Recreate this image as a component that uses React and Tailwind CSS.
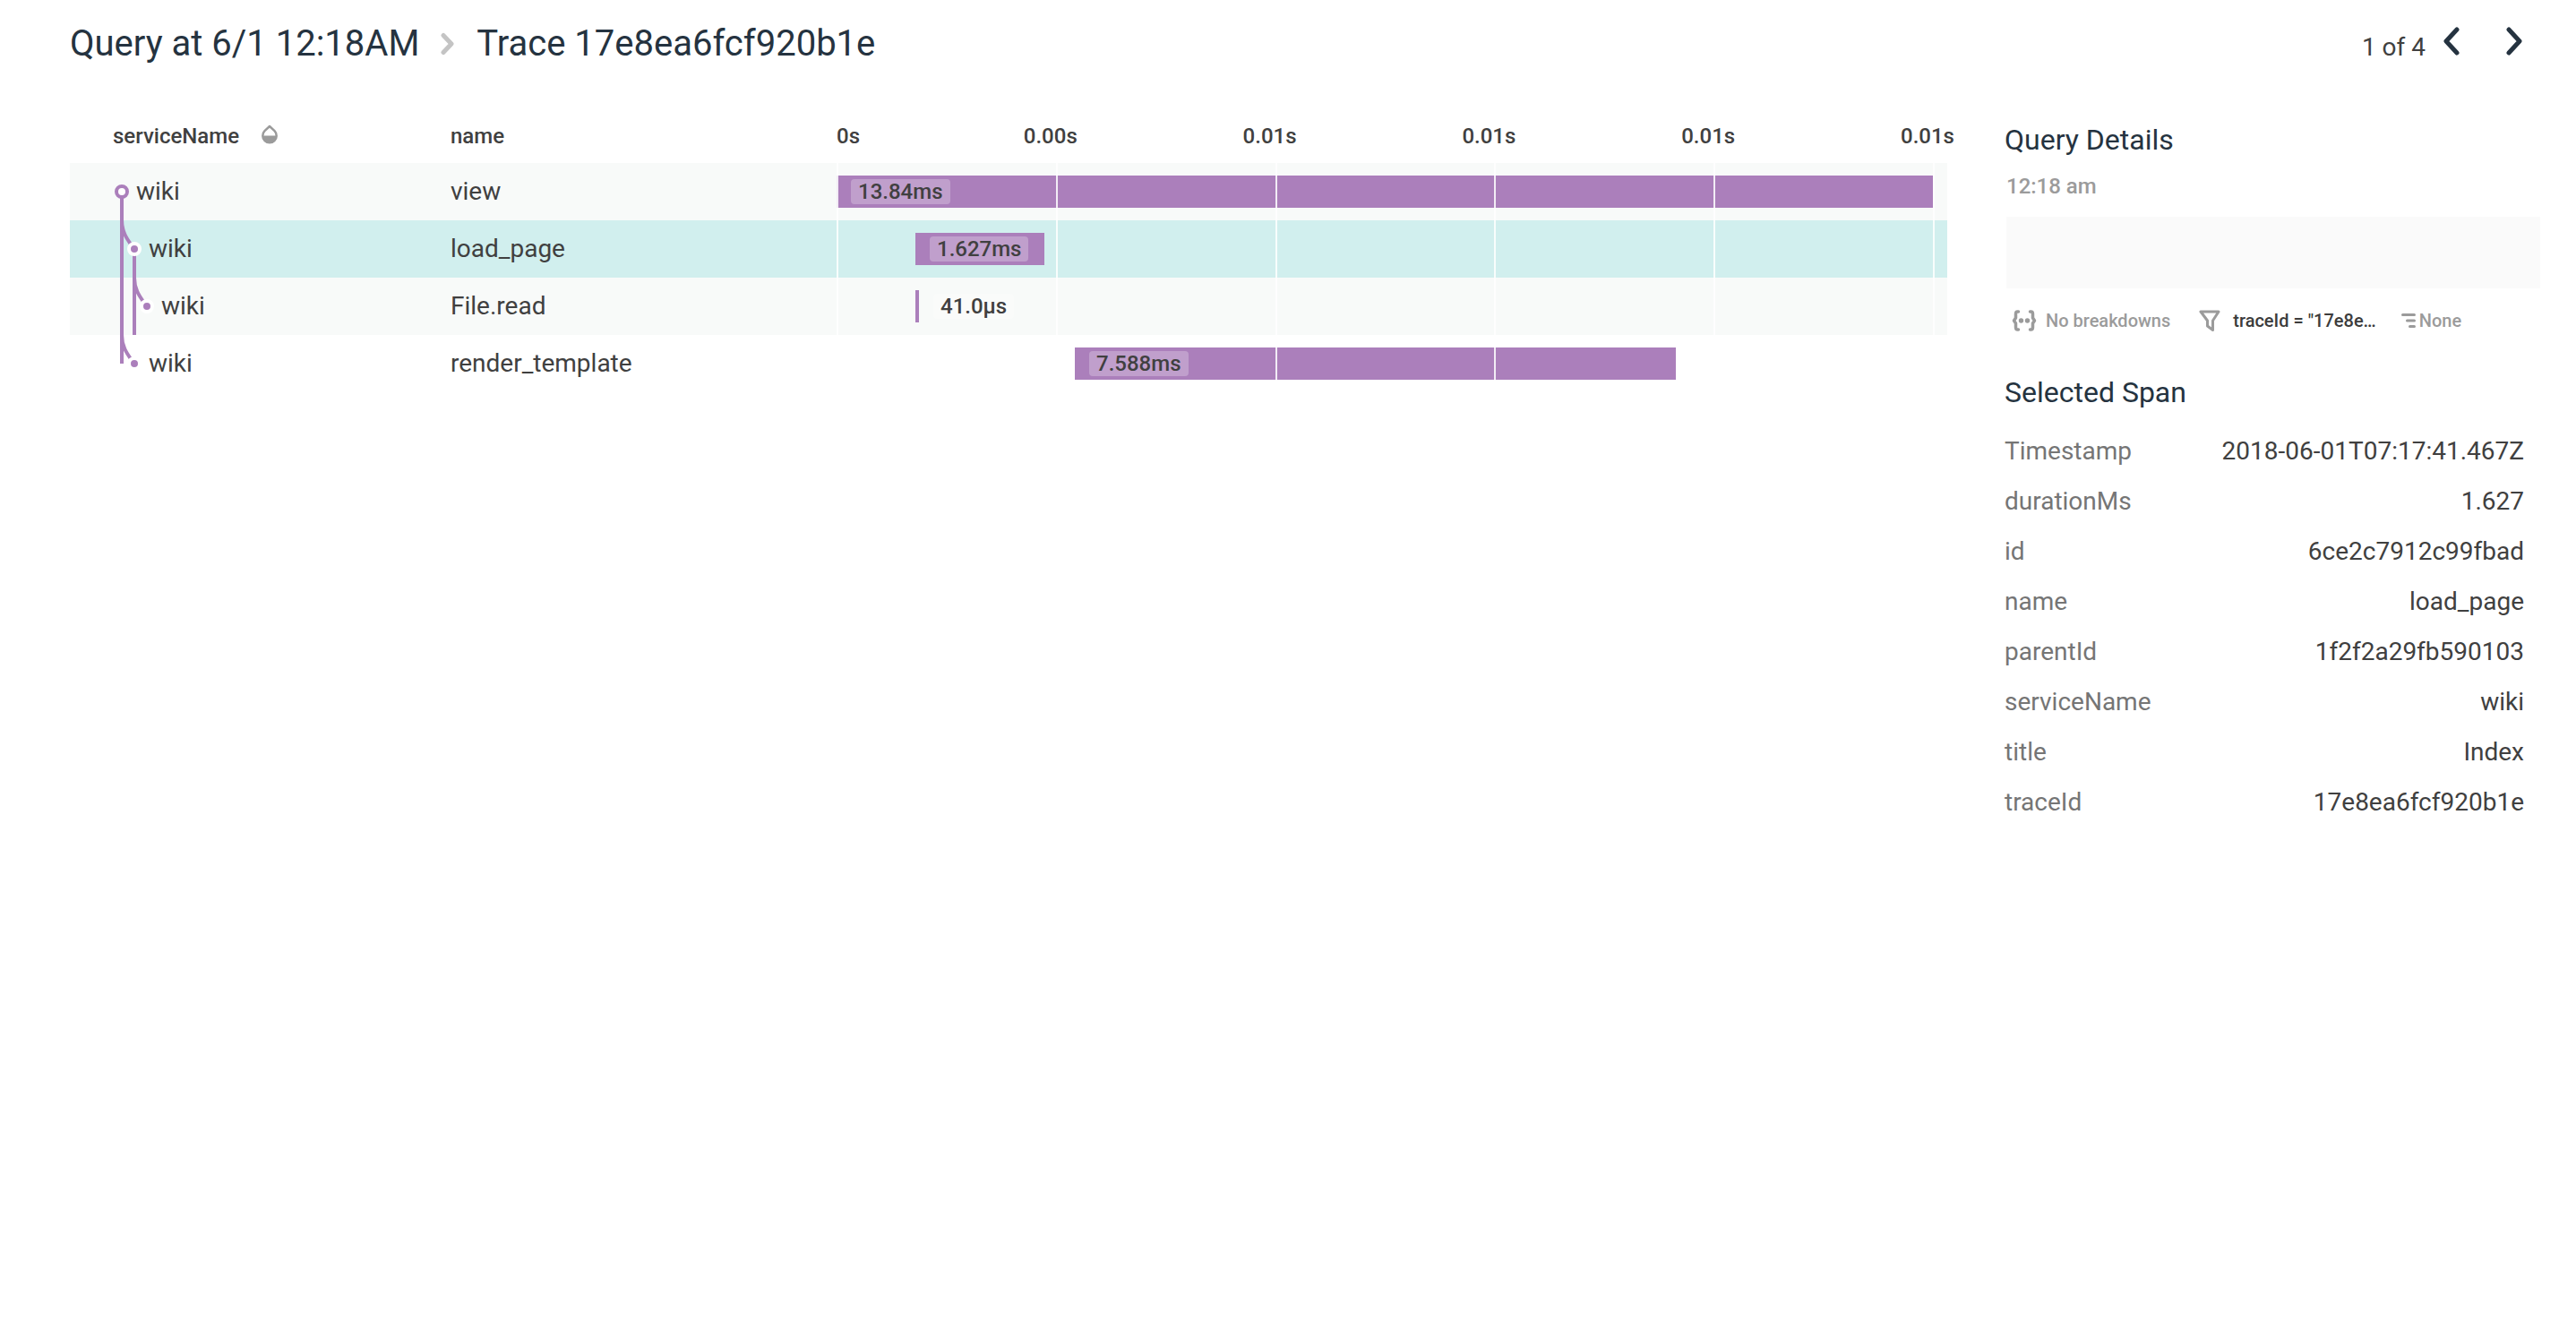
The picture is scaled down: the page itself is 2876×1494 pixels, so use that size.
const TOTAL_MS = 13.84;

const spans = [
  { service: "wiki", name: "view", start: 0, duration: 13.84, label: "13.84ms", depth: 0, lines: [], parent: true },
  { service: "wiki", name: "load_page", start: 0.995, duration: 1.627, label: "1.627ms", depth: 1, lines: [0], parent: true, selected: true },
  { service: "wiki", name: "File.read", start: 0.995, duration: 0.041, label: "41.0µs", depth: 2, lines: [0, 1] },
  { service: "wiki", name: "render_template", start: 3.008, duration: 7.588, label: "7.588ms", depth: 1, lines: [], last: true },
];

const ticks = ["0s", "0.00s", "0.01s", "0.01s", "0.01s", "0.01s"];

const details = [
  ["Timestamp", "2018-06-01T07:17:41.467Z"],
  ["durationMs", "1.627"],
  ["id", "6ce2c7912c99fbad"],
  ["name", "load_page"],
  ["parentId", "1f2f2a29fb590103"],
  ["serviceName", "wiki"],
  ["title", "Index"],
  ["traceId", "17e8ea6fcf920b1e"],
];

function TreeNode({ span }) {
  const x = 10 + span.depth * 14;
  const px = x - 14;
  return (
    <svg width={x + 16} height="64" className="shrink-0" fill="none" stroke="#ab7fbb" strokeWidth="4" aria-hidden="true">
      {span.lines.map((level) => (
        <path key={level} d={`M${10 + level * 14} 0V64`} />
      ))}
      {span.last && <path d={`M${px} 0V32`} />}
      {span.parent && <path d={`M${x} 32V64`} />}
      {span.depth > 0 && (
        <path d={`M${px} 0C${px} 12 ${px + 5} 20 ${px + 11} 28`} />
      )}
      {span.depth === 0 ? (
        <circle cx={x} cy="32" r="6" fill="#fff" />
      ) : (
        <circle cx={x} cy="32" r="6" stroke="#fff" fill="#ab7fbb" />
      )}
    </svg>
  );
}

function Chevron({ left }) {
  return (
    <svg width="18" height="32" viewBox="0 0 18 32" fill="none" stroke="currentColor" strokeWidth="5" strokeLinecap="round" strokeLinejoin="round" aria-hidden="true">
      <path d={left ? "M15 3 3 16l12 13" : "m3 3 12 13L3 29"} />
    </svg>
  );
}

function BreadcrumbArrow() {
  return (
    <svg width="16" height="26" viewBox="0 0 16 26" className="mx-6" fill="none" stroke="#c4c4c4" strokeWidth="5" strokeLinecap="round" strokeLinejoin="round" aria-hidden="true">
      <path d="m3 3.5 9 9.500-9 9.500" />
    </svg>
  );
}

function DropIcon() {
  return (
    <svg width="20" height="22" viewBox="0 0 20 22" aria-hidden="true">
      <path d="M10 2 4.500 7.200a7.700 7.700 0 1 0 11 0Z" fill="#fff" stroke="#9b9b9b" strokeWidth="2.500" strokeLinejoin="round" />
      <path d="M2 12.500h16a8 8 0 0 1-16 0Z" fill="#9b9b9b" />
    </svg>
  );
}

function BracesIcon() {
  return (
    <svg width="28" height="24" viewBox="0 0 28 24" fill="none" stroke="#9b9b9b" strokeWidth="3.500" strokeLinecap="round" strokeLinejoin="round" aria-hidden="true">
      <path d="M7.500 2H6.500Q4.500 2 4.500 4.500V9L2.500 12l2 3v4.500q0 2.500 2 2.500h1" />
      <path d="M20.500 2h1q2 0 2 2.500V9l2 3-2 3v4.500q0 2.500-2 2.500h-1" />
      <circle cx="10.500" cy="12" r="2.700" fill="#9b9b9b" stroke="none" />
      <circle cx="17.500" cy="12" r="2.700" fill="#9b9b9b" stroke="none" />
    </svg>
  );
}

function FunnelIcon() {
  return (
    <svg width="24" height="24" viewBox="0 0 24 24" fill="none" stroke="#9b9b9b" strokeWidth="3" strokeLinejoin="round" aria-hidden="true">
      <path d="M2 2h20l-6.500 10v10.500l-6-4.500v-6Z" />
    </svg>
  );
}

function OrderIcon() {
  return (
    <svg width="16" height="18" viewBox="0 0 16 18" stroke="#9b9b9b" strokeWidth="3" strokeLinecap="round" aria-hidden="true">
      <path d="M1.500 2.500h13M6.500 9h8M9.500 15.500h5" />
    </svg>
  );
}

function Bar({ span }) {
  const wide = span.duration / TOTAL_MS > 0.1;
  const pill = (
    <span className="ml-4 rounded bg-white/25 px-2 text-2xl leading-7 font-medium">{span.label}</span>
  );
  return (
    <div className="mr-4 flex items-center">
      <div
        className="flex h-9 min-w-1 shrink-0 items-center bg-[#ab7fbb]"
        style={{
          marginLeft: `${(span.start / TOTAL_MS) * 100}%`,
          width: `${(span.duration / TOTAL_MS) * 100}%`,
        }}
      >
        {wide && pill}
      </div>
      {!wide && pill}
    </div>
  );
}

function rowColor(span, index) {
  if (span.selected) return "bg-[#d1efee]";
  return index < 3 ? "bg-[#f8faf9]" : "bg-white";
}

function TraceTable() {
  return (
    <table className="w-full table-fixed text-left text-[28px] leading-8">
      <colgroup>
        <col className="w-[425px]" />
        <col className="w-[431px]" />
        <col />
      </colgroup>
      <thead>
        <tr className="h-[62px] text-2xl leading-8">
          <th scope="col" className="p-0 pt-0.5 pl-12 font-medium">
            <span className="flex items-center gap-6">
              serviceName
              <button type="button" aria-label="Color by serviceName" className="mb-1">
                <DropIcon />
              </button>
            </span>
          </th>
          <th scope="col" className="p-0 pt-0.5 font-medium">name</th>
          <th scope="col" className="p-0 pt-0.5 font-medium">
            <div className="mr-[14px] grid grid-cols-[repeat(5,1fr)_2px]">
              {ticks.map((tick, i) => (
                <span key={i} className={i === 0 ? "" : "-ml-9 whitespace-nowrap"}>{tick}</span>
              ))}
            </div>
          </th>
        </tr>
      </thead>
      <tbody>
        {spans.map((span, index) => (
          <tr key={span.name} className={`h-16 ${rowColor(span, index)}`}>
            <td className="p-0 pl-12">
              <div className="flex items-center">
                <TreeNode span={span} />
                {span.service}
              </div>
            </td>
            <td className="p-0">{span.name}</td>
            <td className="relative p-0">
              <Bar span={span} />
              <div className="absolute inset-y-0 right-[14px] left-0 grid grid-cols-[repeat(5,1fr)_2px]">
                {ticks.map((_, i) => (
                  <span key={i} className="border-l-2 border-white/85" />
                ))}
              </div>
            </td>
          </tr>
        ))}
      </tbody>
    </table>
  );
}

function Sidebar() {
  return (
    <aside className="w-[638px] shrink-0 pt-4 pr-10">
      <h2 className="text-[32px] leading-10 text-[#253340]">Query Details</h2>
      <p className="mt-4 ml-0.5 text-2xl leading-8 font-medium text-[#9b9b9b]">12:18 am</p>
      <div className="mt-[18px] ml-0.5 h-20 bg-[#fafafa]" />
      <div className="mt-6 ml-2 flex h-6 items-center text-xl leading-6 font-medium whitespace-nowrap text-[#9b9b9b]">
        <BracesIcon />
        <span className="ml-[10px]">No breakdowns</span>
        <span className="ml-8"><FunnelIcon /></span>
        <span className="ml-[14px] text-[#3c3c3c]">traceId = "17e8e…</span>
        <span className="ml-7"><OrderIcon /></span>
        <span className="ml-1">None</span>
      </div>
      <h2 className="mt-12 text-[32px] leading-10 text-[#253340]">Selected Span</h2>
      <dl className="mt-[18px] mr-[18px] text-[28px] leading-[56px]">
        {details.map(([key, value]) => (
          <div key={key} className="flex justify-between">
            <dt className="text-[#757575]">{key}</dt>
            <dd>{value}</dd>
          </div>
        ))}
      </dl>
    </aside>
  );
}

export default function App() {
  return (
    <div className="min-h-screen bg-white font-['Roboto',sans-serif] text-[#404040]">
      <header className="flex items-start justify-between pt-6 pr-[60px] pb-11 pl-[78px]">
        <nav aria-label="Breadcrumb" className="flex items-center text-[40px] leading-[50px] text-[#253340]">
          <a href="#query">Query at 6/1 12:18AM</a>
          <BreadcrumbArrow />
          <h1>Trace 17e8ea6fcf920b1e</h1>
        </nav>
        <div className="flex items-start pt-1.5">
          <span className="text-[28px] leading-[46px]">1 of 4</span>
          <button type="button" aria-label="Previous trace" className="ml-5 text-[#253340]">
            <Chevron left />
          </button>
          <button type="button" aria-label="Next trace" className="ml-[52px] text-[#253340]">
            <Chevron />
          </button>
        </div>
      </header>
      <div className="flex items-start">
        <main className="min-w-0 flex-1 pr-16 pl-[78px]">
          <TraceTable />
        </main>
        <Sidebar />
      </div>
    </div>
  );
}
